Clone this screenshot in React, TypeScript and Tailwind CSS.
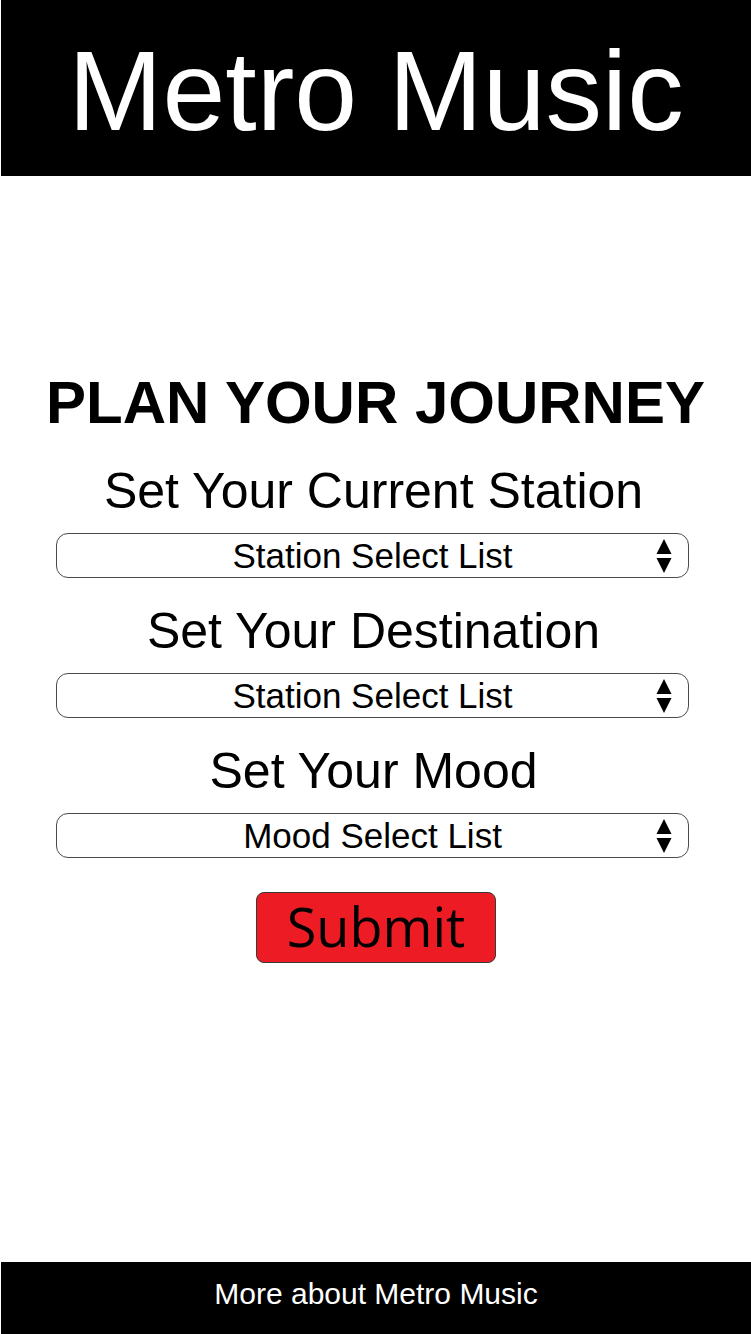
import React from 'react'

const SANS = { fontFamily: '"Liberation Sans", Arial, Helvetica, sans-serif' }

function UpDownArrows() {
  return (
    <svg width="18" height="38" viewBox="0 0 18 38" className="shrink-0">
      <path d="M9 2 L16.5 17 L1.5 17 Z" fill="#000" />
      <path d="M1.5 21 L16.5 21 L9 36 Z" fill="#000" />
    </svg>
  )
}

function FakeSelect({ label }: { label: string }) {
  return (
    <div className="ml-[56px] mr-[62px] h-[45px] border border-[#4a4a4a] rounded-[12px] bg-white flex items-center relative">
      <span className="flex-1 text-center text-[35px] leading-none text-black">{label}</span>
      <div className="absolute right-[15px] top-[3px]">
        <UpDownArrows />
      </div>
    </div>
  )
}

const FIELDS = [
  { title: 'Set Your Current Station', list: 'Station Select List' },
  { title: 'Set Your Destination', list: 'Station Select List' },
  { title: 'Set Your Mood', list: 'Mood Select List' },
]

export default function App() {
  return (
    <div className="min-h-screen h-[1334px] w-full bg-white flex flex-col" style={SANS}>
      <header className="h-[176px] ml-px bg-black shrink-0 flex justify-center">
        <h1 className="mt-[35px] text-[113px] leading-none text-white font-normal">Metro Music</h1>
      </header>

      <main className="flex flex-col">
        <h2 className="mt-[197px] text-center text-[60px] leading-none font-bold text-black">PLAN YOUR JOURNEY</h2>
        <div className="mt-[33px] flex flex-col">
          {FIELDS.map((f, i) => (
            <div key={i} className={i > 0 ? 'mt-[28px]' : ''}>
              <p className="text-center text-[50px] leading-none text-black pr-[4px]">{f.title}</p>
              <div className="mt-[17px]">
                <FakeSelect label={f.list} />
              </div>
            </div>
          ))}
        </div>
        <div className="mt-[34px] flex justify-center">
          <button
            className="w-[240px] h-[71px] ml-[1px] bg-[#ed1c24] border border-[#3a3a3a] rounded-[8px] flex items-center justify-center text-black text-[54px] leading-none"
            style={{ fontFamily: '"Open Sans", "Noto Sans", sans-serif' }}
          >
            <span className="-mt-[4px]">Submit</span>
          </button>
        </div>
      </main>

      <footer className="mt-auto h-[72px] ml-px bg-black shrink-0 flex items-center justify-center">
        <span className="text-white text-[30px] leading-none -mt-[8px]">More about Metro Music</span>
      </footer>
    </div>
  )
}
